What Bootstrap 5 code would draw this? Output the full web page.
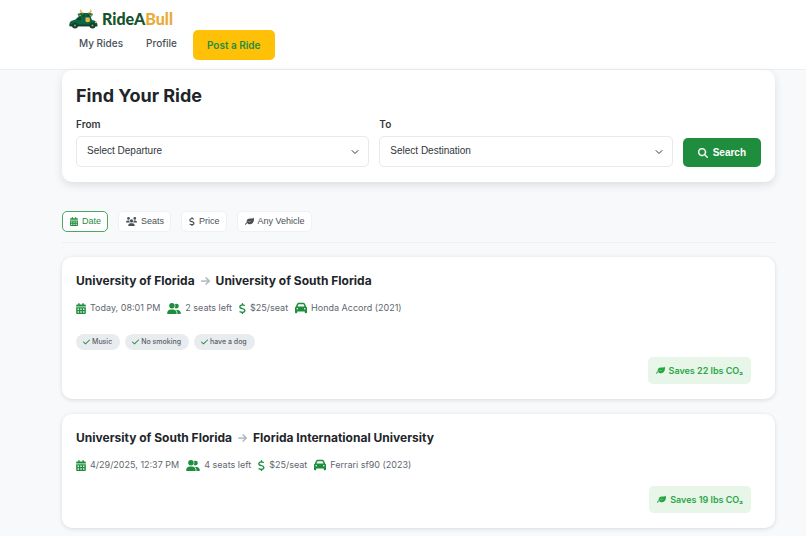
<!DOCTYPE html>
<html lang="en">
<head>
<meta charset="utf-8">
<meta name="viewport" content="width=device-width, initial-scale=1">
<title>RideABull</title>
<link href="https://cdn.jsdelivr.net/npm/bootstrap@5.3.0/dist/css/bootstrap.min.css" rel="stylesheet">
<style>
:root { --brand: #1e8e3e; --ink: #212529; --soft: #5f676f; }
body { font-family: Inter, sans-serif; font-size: 9px; line-height: 16px; color: var(--ink); background: #f8f9fb; }
svg { fill: currentColor; flex: none; }
.shell { padding: 0 31px 0 62px; }
.topbar { background: #fff; border-bottom: 1px solid #eceef1; padding: 8px 31px 9px 69px; }
.brand { font-family: Lato, sans-serif; font-weight: 900; font-size: 16px; line-height: 22px; gap: 4px; color: #14532d; text-decoration: none; }
.brand-accent { color: #e9ab35; }
.menu { gap: 3px; }
.menu-link { font-size: 10px; font-weight: 500; color: #495057; text-decoration: none; padding: 5px 10px; }
.btn-post { font-size: 10px; font-weight: 600; line-height: 16px; padding: 7px 14px; color: var(--brand); background: #ffc107; border: 0; border-radius: 5px; margin-left: 3px; }
.panel { background: #fff; border-radius: 10px; box-shadow: 0 3px 9px rgba(30,45,60,.13); padding: 14px 14px 15px; }
.panel h1 { font-size: 18px; font-weight: 700; line-height: 23px; margin: 0 0 9px; }
.search-row { gap: 10px; }
.field { flex: 1 1 0; min-width: 0; }
.field label { display: block; font-size: 10px; font-weight: 600; margin-bottom: 4px; color: #343a40; }
.field .form-select { font-family: "Liberation Sans", sans-serif; font-size: 10px; line-height: 16px; color: #30363c; height: 31px; padding: 6px 24px 7px 10px; border: 1px solid #e6e9ed; border-radius: 5px; background-size: 8px 8px; background-position: right 9px center; }
.btn-search { font-family: "Liberation Sans", sans-serif; font-size: 10px; font-weight: 700; line-height: 17px; gap: 5px; padding: 6px 15px; color: #fff; background: var(--brand); border: 0; border-radius: 5px; }
.filters { gap: 10px; padding: 29px 0 10px; margin-bottom: 14px; border-bottom: 1px solid #eef0f3; }
.btn-filter { font-family: "Liberation Sans", sans-serif; font-size: 9px; line-height: 15px; color: #495057; background: #fff; border: 1px solid #eff1f4; border-radius: 5px; padding: 2px 6px 2px 7px; gap: 4px; }
.btn-filter.active { color: var(--brand); background: #fff; border-color: #4ca765; }
.ride { background: #fff; border-radius: 10px; box-shadow: 0 1px 4px rgba(30,45,60,.15); padding: 15px 14px; margin-bottom: 15px; }
.ride h2 { font-size: 12px; font-weight: 700; line-height: 17px; margin: 0 0 11px; gap: 6px; }
.ride h2 svg { color: #adb5bd; }
.details { gap: 7px; color: var(--soft); }
.details svg { color: var(--brand); margin-right: 4px; }
.tags { gap: 5px; margin-top: 18px; }
.pill { font-size: 7px; font-weight: 500; line-height: 16px; color: #596168; background: #e9ecef; border-radius: 9px; padding: 0 8px 0 7px; gap: 2px; }
.pill svg { color: var(--brand); }
.saving { font-size: 9px; font-weight: 600; line-height: 17px; gap: 4px; padding: 5px 8px; color: #28a745; background: #e8f5e9; border-radius: 5px; margin-right: 10px; }
.saving-row { margin-top: 7px; }
.saving-row.spaced { margin-top: 13px; }
</style>
<script src="https://cdn.jsdelivr.net/npm/bootstrap@5.3.0/dist/js/bootstrap.bundle.min.js"></script>
</head>
<body>
<svg class="d-none" aria-hidden="true">
  <symbol id="i-calendar" viewBox="0 0 448 512"><path fill-rule="evenodd" d="M96 32a32 32 0 0 1 64 0v32h128V32a32 32 0 0 1 64 0v32h48c27 0 48 21 48 48v48H0v-48c0-27 21-48 48-48h48V32zM0 192h448v272c0 27-21 48-48 48H48c-27 0-48-21-48-48V192zm64 80v32c0 9 7 16 16 16h32c9 0 16-7 16-16v-32c0-9-7-16-16-16H80c-9 0-16 7-16 16zm128 0v32c0 9 7 16 16 16h32c9 0 16-7 16-16v-32c0-9-7-16-16-16h-32c-9 0-16 7-16 16zm128 0v32c0 9 7 16 16 16h32c9 0 16-7 16-16v-32c0-9-7-16-16-16h-32c-9 0-16 7-16 16zM64 400v32c0 9 7 16 16 16h32c9 0 16-7 16-16v-32c0-9-7-16-16-16H80c-9 0-16 7-16 16zm128 0v32c0 9 7 16 16 16h32c9 0 16-7 16-16v-32c0-9-7-16-16-16h-32c-9 0-16 7-16 16zm128 0v32c0 9 7 16 16 16h32c9 0 16-7 16-16v-32c0-9-7-16-16-16h-32c-9 0-16 7-16 16z"/></symbol>
  <symbol id="i-pair" viewBox="0 0 640 512"><path d="M96 128a128 128 0 1 1 256 0 128 128 0 1 1-256 0zM0 482c0-98 80-178 178-178h92c98 0 178 80 178 178 0 17-13 30-30 30H30c-17 0-30-13-30-30zm609 30H471c6-9 9-20 9-32v-8c0-61-27-115-70-152h77c85 0 153 68 153 153 0 22-14 39-31 39zM432 256c-31 0-59-13-79-33 19-26 31-59 31-95 0-27-7-52-18-74 18-14 41-22 66-22a112 112 0 1 1 0 224z"/></symbol>
  <symbol id="i-users" viewBox="0 0 640 512"><path d="M144 0a80 80 0 1 1 0 160 80 80 0 1 1 0-160zm368 0a80 80 0 1 1 0 160 80 80 0 1 1 0-160zM0 299c0-59 48-107 107-107h42c16 0 32 4 46 10-2 7-2 15-2 22 0 38 17 72 43 96H21c-11 0-21-10-21-21zm405 21c26-24 43-58 43-96 0-8-1-15-2-22 14-6 29-10 45-10h43c59 0 106 48 106 107 0 11-9 21-21 21H405zM224 224a96 96 0 1 1 192 0 96 96 0 1 1-192 0zm-96 261c0-73 60-133 133-133h118c73 0 133 60 133 133 0 15-12 27-27 27H155c-15 0-27-12-27-27z"/></symbol>
  <symbol id="i-dollar" viewBox="0 0 320 512"><path d="M160 0c18 0 32 14 32 32v36c16 2 32 6 62 14 17 5 28 22 23 39-4 17-22 27-39 23-53-14-87-19-121-11-30 7-43 22-46 37-3 18 2 25 10 32 14 12 38 19 79 30 38 10 80 22 106 46 28 25 38 59 31 99-7 41-36 68-72 82-10 4-21 7-33 9v32a32 32 0 0 1-64 0v-34c-26-4-51-12-91-26-16-6-25-24-20-41 6-17 24-26 41-20 67 23 105 30 141 16 21-8 32-20 35-35 2-17-1-26-10-34-14-13-38-20-80-31-37-10-78-21-104-43-28-24-38-57-31-98 8-43 43-73 86-84l33-5V32c0-18 14-32 32-32z"/></symbol>
  <symbol id="i-leaf" viewBox="0 0 512 512"><path d="M280 84C176 84 92 158 92 258c0 12 1 24 4 35 50-35 112-53 176-53h64c14 0 14 18 0 18h-64C150 258 42 310 2 415c-10 28 36 48 50 18 16-40 40-72 70-98 35 45 86 73 150 73 130 0 240-105 240-255 0-38-7-74-19-106-2-6-11-6-14-1-17 28-62 38-113 38h-86z"/></symbol>
  <symbol id="i-search" viewBox="0 0 512 512"><path fill-rule="evenodd" stroke="currentColor" stroke-width="14" d="M416 208c0 46-15 88-40 123l127 126c12 13 12 33 0 46-13 12-33 12-46 0L331 376A208 208 0 1 1 416 208zM208 352a144 144 0 1 0 0-288 144 144 0 1 0 0 288z"/></symbol>
  <symbol id="i-car" viewBox="0 0 512 512"><path fill-rule="evenodd" d="M135 117 109 192h294l-26-75c-5-13-17-21-31-21H166c-14 0-26 8-31 21zm-95 80 35-101c13-38 50-64 91-64h180c41 0 78 26 91 64l35 101c24 9 40 33 40 59v192c0 18-14 32-32 32h-32c-18 0-32-14-32-32v-48H96v48c0 18-14 32-32 32H32c-18 0-32-14-32-32V256c0-26 16-50 40-59zM128 288a32 32 0 1 0-64 0 32 32 0 1 0 64 0zm288 32a32 32 0 1 0 0-64 32 32 0 1 0 0 64z"/></symbol>
  <symbol id="i-arrow" viewBox="0 0 448 512"><path stroke="currentColor" stroke-width="16" d="M439 279c12-13 12-33 0-46L279 73c-13-12-33-12-46 0-12 13-12 33 0 46l106 105H32a32 32 0 0 0 0 64h307L233 393c-12 13-12 33 0 46 13 12 33 12 46 0z"/></symbol>
  <symbol id="i-check" viewBox="0 0 448 512"><path d="M439 105c12 13 12 33 0 46L183 407c-13 12-33 12-46 0L9 279c-12-13-12-33 0-46 13-12 33-12 46 0l105 106L393 105c13-12 33-12 46 0z"/></symbol>
</svg>

<header class="topbar">
  <a class="brand d-flex align-items-center" href="#">
    <svg width="29" height="20" viewBox="0 0 58 40" aria-hidden="true">
      <path fill="#0c6642" d="M1 30c0-4 2-6 6-7l6-2 6-6c2-2 4-3 6-3h17l4 10c7 1 11 4 11 10v3H2c-1-1-1-3-1-5z"/>
      <path fill="#123f2e" d="m13 22 6-5h5v5zM1 31h55v3H1z"/>
      <path fill="#0c6642" d="M17 10c4-2 6-2 9-2h14c3 0 5 0 8 2-1 4-4 6-7 6v8c-2 5-11 5-14 0l-2-8c-4 0-7-2-8-6z"/>
      <path fill="#e5b94c" d="M24 0c-4 4-3 8 4 9l2-2c-4 0-6-3-6-7zm19 0c0 4-2 7-6 7l2 2c7-1 8-5 4-9zM19 11l6 1-3 2zm28 0-6 1 3 2zM33 17h8l1 7c-2 3-6 3-9 1z"/>
      <path fill="#123f2e" d="M29 12h3v3h-3zm8 0h3v3h-3z"/>
      <path fill="#dfbd54" d="M52 25h4v3h-4z"/>
      <circle cx="12" cy="33" r="6" fill="#123f2e"/><circle cx="12" cy="33" r="2" fill="#8ba95a"/>
      <circle cx="47" cy="33" r="6" fill="#123f2e"/><circle cx="47" cy="33" r="2" fill="#8ba95a"/>
    </svg>
    <span>RideA<span class="brand-accent">Bull</span></span>
  </a>
  <nav class="menu d-flex align-items-start" aria-label="Main">
    <a class="menu-link" href="#">My Rides</a>
    <a class="menu-link" href="#">Profile</a>
    <button class="btn btn-post" type="button">Post a Ride</button>
  </nav>
</header>

<main class="shell">
  <section class="panel">
    <h1>Find Your Ride</h1>
    <form class="search-row d-flex align-items-end">
      <div class="field"><label for="from">From</label>
        <select class="form-select" id="from"><option>Select Departure</option></select></div>
      <div class="field"><label for="to">To</label>
        <select class="form-select" id="to"><option>Select Destination</option></select></div>
      <button class="btn btn-search d-flex align-items-center" type="button"><svg width="10" height="10"><use href="#i-search"/></svg>Search</button>
    </form>
  </section>

  <div class="filters d-flex flex-wrap">
    <button class="btn btn-filter active d-flex align-items-center" type="button"><svg width="8" height="9"><use href="#i-calendar"/></svg>Date</button>
    <button class="btn btn-filter d-flex align-items-center" type="button"><svg width="11" height="9"><use href="#i-users"/></svg>Seats</button>
    <button class="btn btn-filter d-flex align-items-center" type="button"><svg width="6" height="9"><use href="#i-dollar"/></svg>Price</button>
    <button class="btn btn-filter d-flex align-items-center" type="button"><svg width="9" height="9"><use href="#i-leaf"/></svg>Any Vehicle</button>
  </div>

  <article class="ride">
    <h2 class="d-flex align-items-center">University of Florida <svg width="9" height="10"><use href="#i-arrow"/></svg> University of South Florida</h2>
    <div class="details d-flex flex-wrap">
      <span class="d-flex align-items-center"><svg width="10" height="11"><use href="#i-calendar"/></svg>Today, 08:01 PM</span>
      <span class="d-flex align-items-center"><svg width="14" height="11"><use href="#i-pair"/></svg>2 seats left</span>
      <span class="d-flex align-items-center"><svg width="7" height="11"><use href="#i-dollar"/></svg>$25/seat</span>
      <span class="d-flex align-items-center"><svg width="12" height="12"><use href="#i-car"/></svg>Honda Accord (2021)</span>
    </div>
    <div class="tags d-flex flex-wrap">
      <span class="pill d-flex align-items-center"><svg width="7" height="8"><use href="#i-check"/></svg>Music</span>
      <span class="pill d-flex align-items-center"><svg width="7" height="8"><use href="#i-check"/></svg>No smoking</span>
      <span class="pill d-flex align-items-center"><svg width="7" height="8"><use href="#i-check"/></svg>have a dog</span>
    </div>
    <div class="saving-row d-flex justify-content-end"><span class="saving d-flex align-items-center"><svg width="9" height="9"><use href="#i-leaf"/></svg>Saves 22 lbs CO₂</span></div>
  </article>

  <article class="ride">
    <h2 class="d-flex align-items-center">University of South Florida <svg width="9" height="10"><use href="#i-arrow"/></svg> Florida International University</h2>
    <div class="details d-flex flex-wrap">
      <span class="d-flex align-items-center"><svg width="10" height="11"><use href="#i-calendar"/></svg>4/29/2025, 12:37 PM</span>
      <span class="d-flex align-items-center"><svg width="14" height="11"><use href="#i-pair"/></svg>4 seats left</span>
      <span class="d-flex align-items-center"><svg width="7" height="11"><use href="#i-dollar"/></svg>$25/seat</span>
      <span class="d-flex align-items-center"><svg width="12" height="12"><use href="#i-car"/></svg>Ferrari sf90 (2023)</span>
    </div>
    <div class="saving-row spaced d-flex justify-content-end"><span class="saving d-flex align-items-center"><svg width="9" height="9"><use href="#i-leaf"/></svg>Saves 19 lbs CO₂</span></div>
  </article>
</main>
</body>
</html>
